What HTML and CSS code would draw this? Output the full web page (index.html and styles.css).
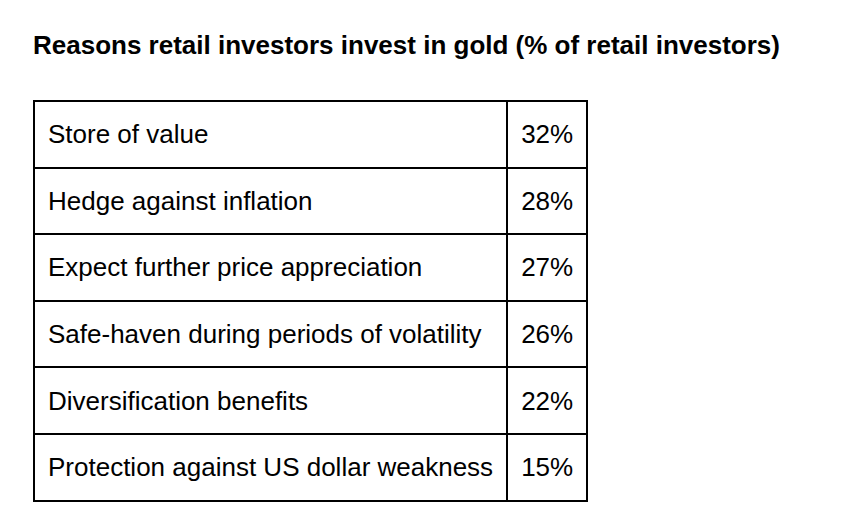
FILE: index.html
```html
<!DOCTYPE html>
<html>
<head>
<meta charset="utf-8">
<link rel="stylesheet" href="styles.css">
</head>
<body>
<main class="page">
  <h1 class="title">Reasons retail investors invest in gold (% of retail investors)</h1>
  <table class="data">
    <tr><td class="label">Store of value</td><td class="value">32%</td></tr>
    <tr><td class="label">Hedge against inflation</td><td class="value">28%</td></tr>
    <tr><td class="label">Expect further price appreciation</td><td class="value">27%</td></tr>
    <tr><td class="label">Safe-haven during periods of volatility</td><td class="value">26%</td></tr>
    <tr><td class="label">Diversification benefits</td><td class="value">22%</td></tr>
    <tr><td class="label">Protection against US dollar weakness</td><td class="value">15%</td></tr>
  </table>
</main>
</body>
</html>
```
FILE: styles.css
```css
html, body {
  margin: 0;
  padding: 0;
  background: #fff;
}
.page {
  padding: 30px 33px;
  font-family: "Liberation Sans", Arial, sans-serif;
  color: #000;
}
.title {
  margin: 0 0 40px 0;
  font-size: 26px;
  font-weight: bold;
  line-height: 30px;
}
.data {
  border-collapse: collapse;
  border: 2px solid #000;
  font-size: 26px;
}
.data td {
  border: 2px solid #000;
  height: 64.6px;
  padding: 0 13px;
  line-height: 30px;
}
```
